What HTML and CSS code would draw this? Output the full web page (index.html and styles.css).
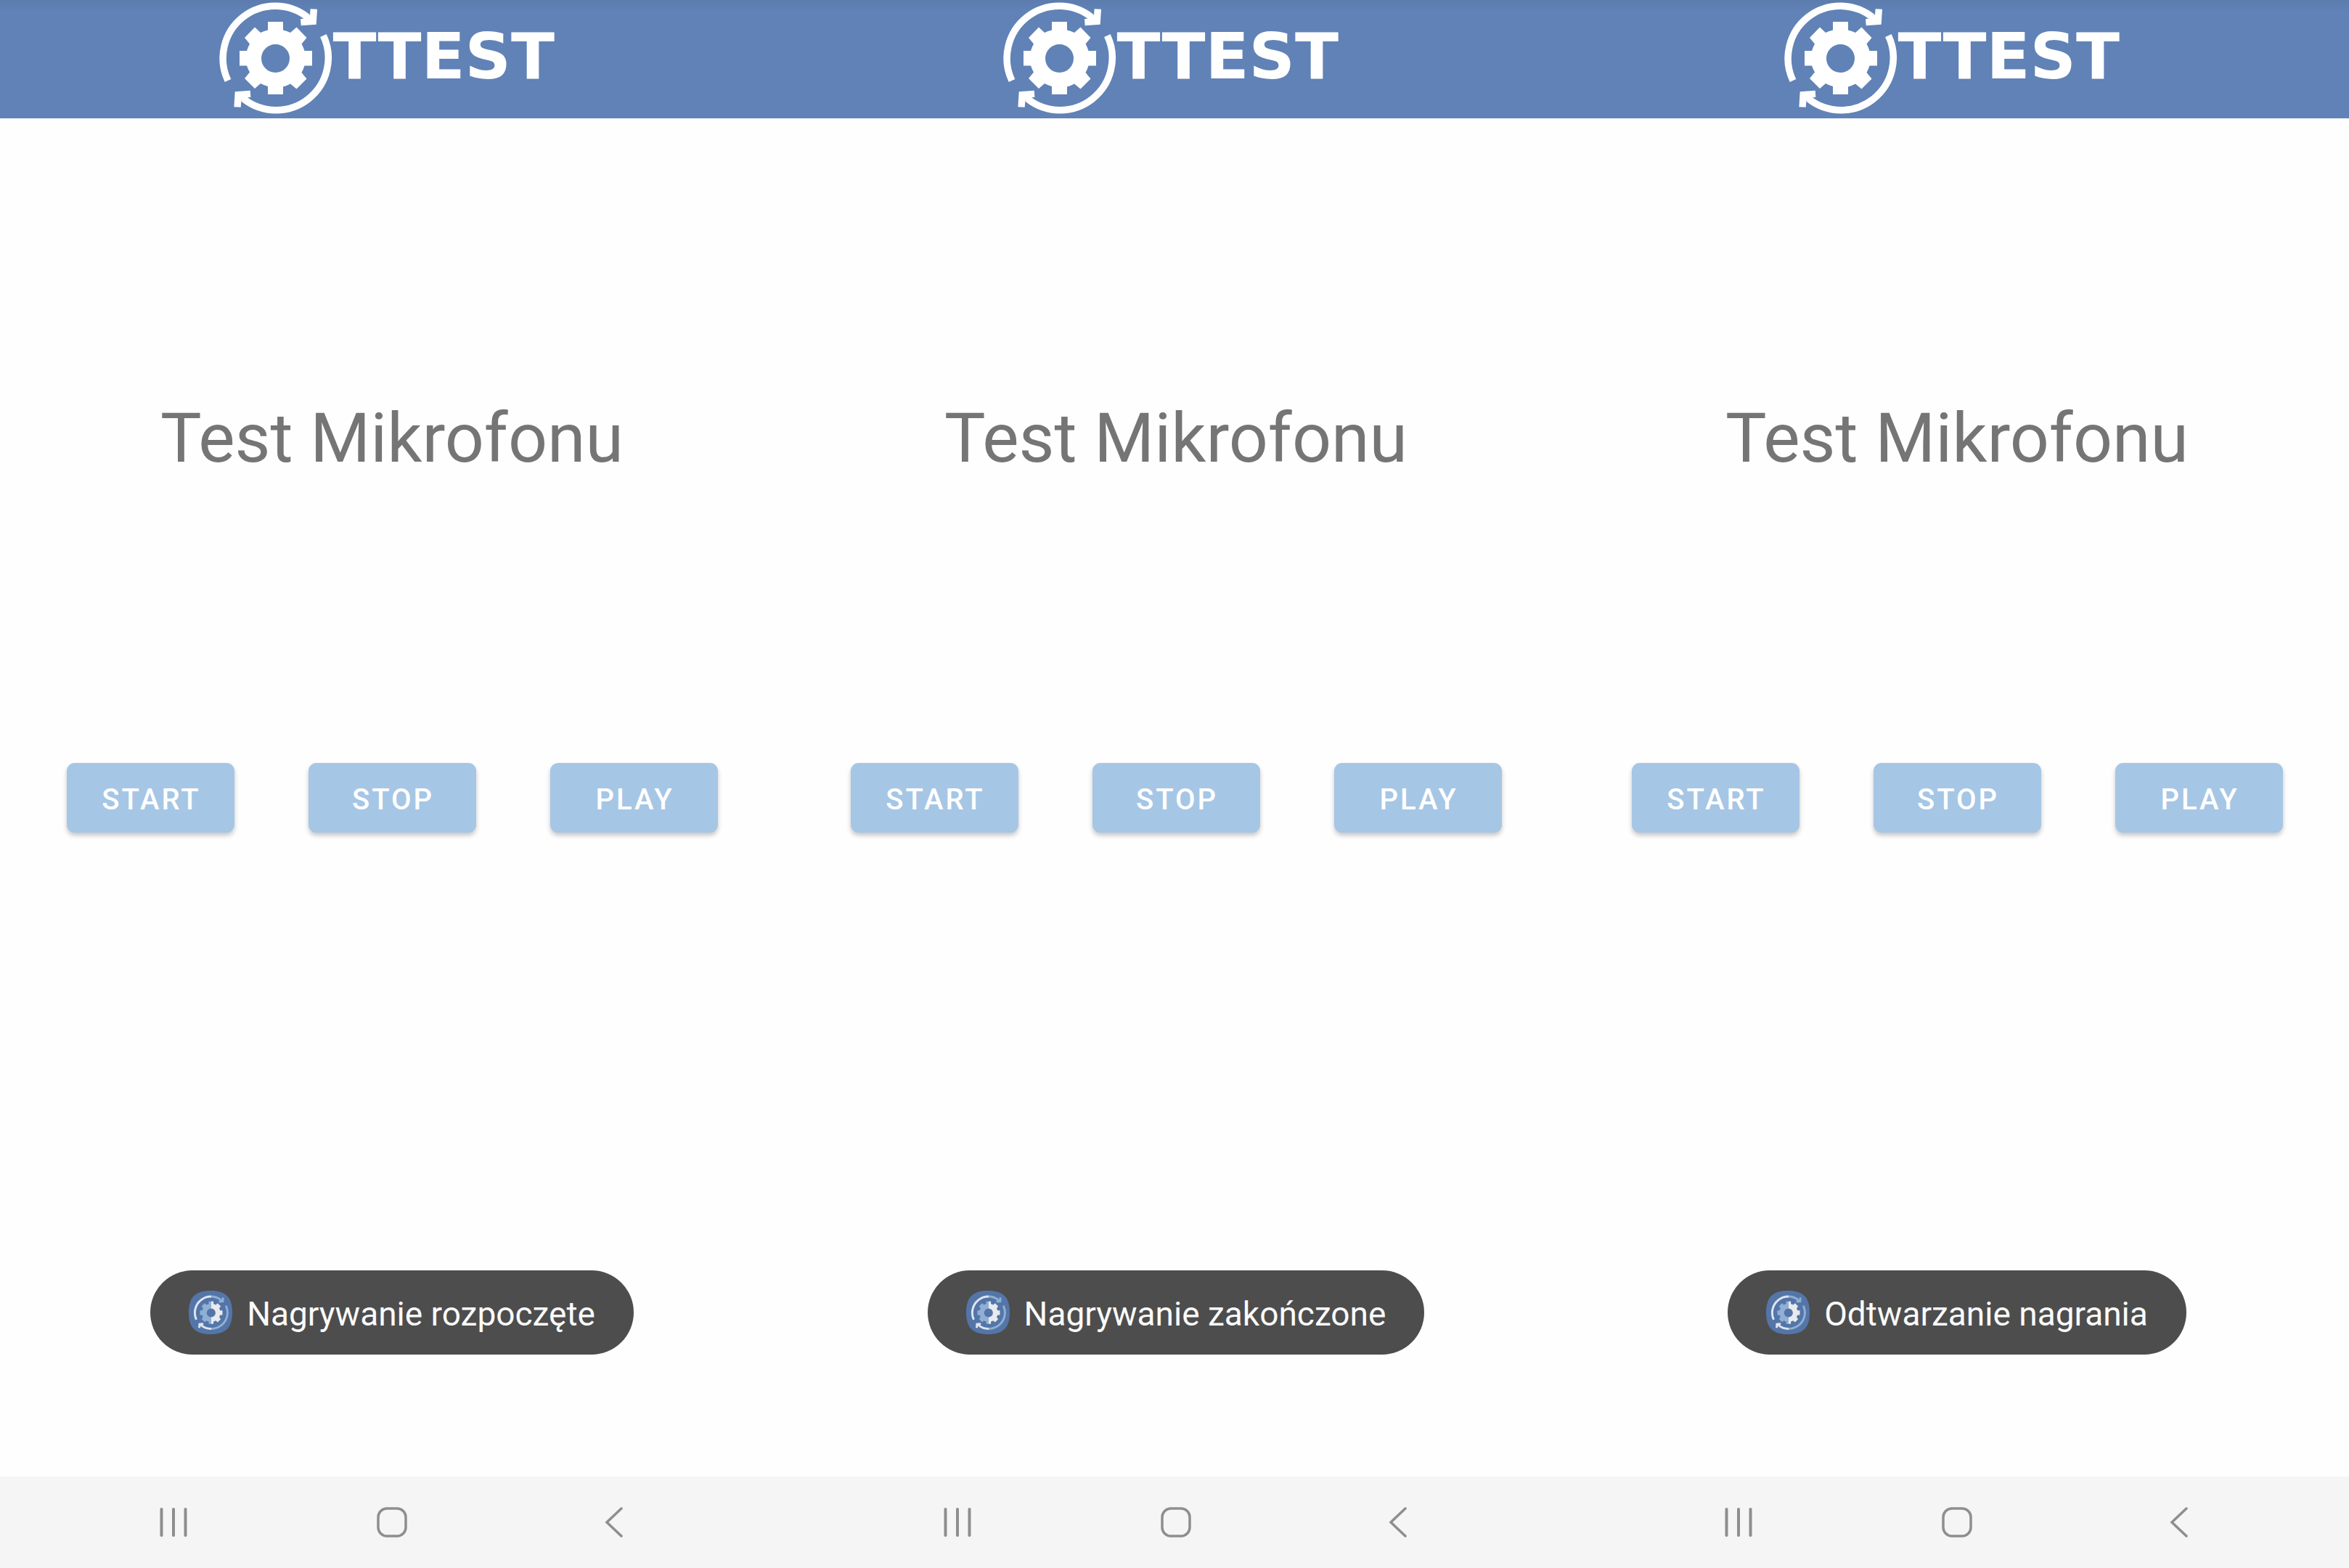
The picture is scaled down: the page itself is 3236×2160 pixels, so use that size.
FILE: index.html
```html
<!DOCTYPE html>
<html lang="pl">
<head>
<meta charset="utf-8">
<meta name="viewport" content="width=device-width, initial-scale=1">
<title>OTTest – Test Mikrofonu</title>
<link rel="stylesheet" href="styles.css">
</head>
<body>
<!-- Shared icon shapes -->
<svg class="defs" aria-hidden="true">
  <defs>
    <clipPath id="left-half"><rect x="0" y="0" width="78" height="160"/></clipPath>
    <clipPath id="right-half"><rect x="78" y="0" width="78" height="160"/></clipPath>
    <symbol id="gear" viewBox="0 0 156 160">
      <path fill="currentColor" fill-rule="evenodd" d="M67 30h21v11.500q5.500 1.300 10 3.500l8.500-7.500 14 14.500-7 8.500q2.500 4.500 4 9.500H128v20.500h-10.500q-1.500 5-4 9.500l7 8.500-14 14-8.500-7q-4.500 2.500-10 4V130H67v-11q-5.500-1.500-10-4l-8 7-14-14 7-8.500q-2.500-4.500-4-9H28V70h10q1.500-5 4-9.500L35 52l14-14.500 8 7.500q4.500-2.200 10-3.500zM77.500 61a19.500 19.500 0 1 0 0 39a19.500 19.500 0 1 0 0-39z"/>
    </symbol>
    <g id="arrow">
      <path fill="none" stroke="currentColor" stroke-width="9.500" d="M12 111A72 72 0 0 1 122 24"/>
      <path fill="currentColor" d="M125.700 12.300l9.300.4-1.300 21-21 1.600-.7-9 6-1 7-4.600z"/>
    </g>
    <symbol id="arrows" viewBox="0 0 156 160">
      <use href="#arrow"/>
      <use href="#arrow" transform="rotate(180 77.700 80)"/>
    </symbol>
    <symbol id="app" viewBox="0 0 60 60">
      <path fill="#5475a8" d="M30 0C51 0 60 9 60 30S51 60 30 60 0 51 0 30 9 0 30 0z"/>
      <g transform="translate(6.800 5.500) scale(.31)">
        <g color="#dfe6f0" clip-path="url(#left-half)"><use href="#arrows" width="156" height="160"/></g>
        <g color="#8fafd4" clip-path="url(#right-half)"><use href="#arrows" width="156" height="160"/></g>
        <g color="#8fafd4" clip-path="url(#left-half)"><use href="#gear" width="156" height="160"/></g>
        <g color="#e8eaee" clip-path="url(#right-half)"><use href="#gear" width="156" height="160"/></g>
      </g>
    </symbol>
    <symbol id="recents" viewBox="0 0 42 42">
      <path fill="none" stroke="currentColor" stroke-width="4" stroke-linecap="round" d="M5.500 3v36M22 3v36M38.500 3v36"/>
    </symbol>
    <symbol id="home" viewBox="0 0 42 42">
      <rect x="2" y="2" width="38" height="38" rx="12" fill="none" stroke="currentColor" stroke-width="3.500"/>
    </symbol>
    <symbol id="back" viewBox="0 0 42 42">
      <path fill="none" stroke="currentColor" stroke-width="3.500" stroke-linecap="round" d="M35 2L15 21l20 19"/>
    </symbol>
  </defs>
</svg>
<main class="screens">
  <section class="screen">
    <header class="bar">
      <svg class="emblem" viewBox="0 0 156 160" aria-hidden="true"><use href="#gear"/><use href="#arrows"/></svg>
      <span class="wordmark">TTEST</span>
    </header>
    <h1 class="title">Test Mikrofonu</h1>
    <div class="actions">
      <button class="action" type="button">START</button>
      <button class="action" type="button">STOP</button>
      <button class="action" type="button">PLAY</button>
    </div>
    <div class="toast" role="status">
      <svg class="app-icon" aria-hidden="true"><use href="#app"/></svg>
      <span class="message">Nagrywanie rozpoczęte</span>
    </div>
    <nav class="nav">
      <button class="key" type="button" aria-label="Ostatnie"><svg class="glyph"><use href="#recents"/></svg></button>
      <button class="key" type="button" aria-label="Ekran główny"><svg class="glyph"><use href="#home"/></svg></button>
      <button class="key" type="button" aria-label="Wstecz"><svg class="glyph"><use href="#back"/></svg></button>
    </nav>
  </section>
  <section class="screen">
    <header class="bar">
      <svg class="emblem" viewBox="0 0 156 160" aria-hidden="true"><use href="#gear"/><use href="#arrows"/></svg>
      <span class="wordmark">TTEST</span>
    </header>
    <h1 class="title">Test Mikrofonu</h1>
    <div class="actions">
      <button class="action" type="button">START</button>
      <button class="action" type="button">STOP</button>
      <button class="action" type="button">PLAY</button>
    </div>
    <div class="toast" role="status">
      <svg class="app-icon" aria-hidden="true"><use href="#app"/></svg>
      <span class="message">Nagrywanie zakończone</span>
    </div>
    <nav class="nav">
      <button class="key" type="button" aria-label="Ostatnie"><svg class="glyph"><use href="#recents"/></svg></button>
      <button class="key" type="button" aria-label="Ekran główny"><svg class="glyph"><use href="#home"/></svg></button>
      <button class="key" type="button" aria-label="Wstecz"><svg class="glyph"><use href="#back"/></svg></button>
    </nav>
  </section>
  <section class="screen">
    <header class="bar">
      <svg class="emblem" viewBox="0 0 156 160" aria-hidden="true"><use href="#gear"/><use href="#arrows"/></svg>
      <span class="wordmark">TTEST</span>
    </header>
    <h1 class="title">Test Mikrofonu</h1>
    <div class="actions">
      <button class="action" type="button">START</button>
      <button class="action" type="button">STOP</button>
      <button class="action" type="button">PLAY</button>
    </div>
    <div class="toast" role="status">
      <svg class="app-icon" aria-hidden="true"><use href="#app"/></svg>
      <span class="message">Odtwarzanie nagrania</span>
    </div>
    <nav class="nav">
      <button class="key" type="button" aria-label="Ostatnie"><svg class="glyph"><use href="#recents"/></svg></button>
      <button class="key" type="button" aria-label="Ekran główny"><svg class="glyph"><use href="#home"/></svg></button>
      <button class="key" type="button" aria-label="Wstecz"><svg class="glyph"><use href="#back"/></svg></button>
    </nav>
  </section>
</main>
</body>
</html>
```

FILE: styles.css
```css
* {
  box-sizing: border-box;
}

body {
  margin: 0;
  background: #fefefe;
  font-family: Roboto, sans-serif;
}

button {
  border: 0;
  font-family: inherit;
}

.defs {
  position: absolute;
  width: 0;
  height: 0;
}

/* The last screen overlaps the middle one by 4px */
.screens {
  display: flex;
  min-height: 100vh;
  overflow: hidden;
}

.screen {
  display: flex;
  flex: 1 1 0;
  flex-direction: column;
  align-items: center;
}

.screen:last-child {
  margin-left: -4px;
}

.bar {
  display: flex;
  align-items: center;
  align-self: stretch;
  padding: 0 0 3px 28%;
  background: linear-gradient(#5c7cae, #6082b6 16px);
  color: #fff;
}

.emblem {
  flex: none;
  width: 156px;
  height: 160px;
}

.wordmark {
  padding-bottom: 4px;
  font: bold 88px/88px "DejaVu Sans", sans-serif;
}

.title {
  margin: 385px 0 0;
  color: #757575;
  font-size: 95px;
  font-weight: 400;
  line-height: 112px;
}

.actions {
  display: flex;
  justify-content: center;
  gap: 102px;
  margin-top: 391px;
}

.action {
  width: 231px;
  height: 96px;
  padding: 4px 0 0 3px;
  border-radius: 11px;
  background: #a6c6e5;
  box-shadow: 0 4px 6px rgba(0, 0, 0, 0.22);
  color: #fff;
  font-size: 40px;
  font-weight: 500;
  letter-spacing: 3px;
}

.toast {
  display: flex;
  align-items: center;
  gap: 20px;
  height: 116px;
  margin: auto 0 168px;
  padding: 0 53px;
  border-radius: 58px;
  background: #4d4d4d;
  color: #fafafa;
  font-size: 46px;
}

.app-icon {
  width: 60px;
  height: 60px;
}

.message {
  padding-top: 4px;
  white-space: nowrap;
}

.nav {
  display: flex;
  align-self: stretch;
  justify-content: center;
  height: 126px;
  background: #f5f5f5;
}

.key {
  display: flex;
  align-items: center;
  justify-content: center;
  width: 28%;
  padding: 0;
  background: none;
  color: #8e8e8e;
}

.glyph {
  width: 42px;
  height: 42px;
}
```
